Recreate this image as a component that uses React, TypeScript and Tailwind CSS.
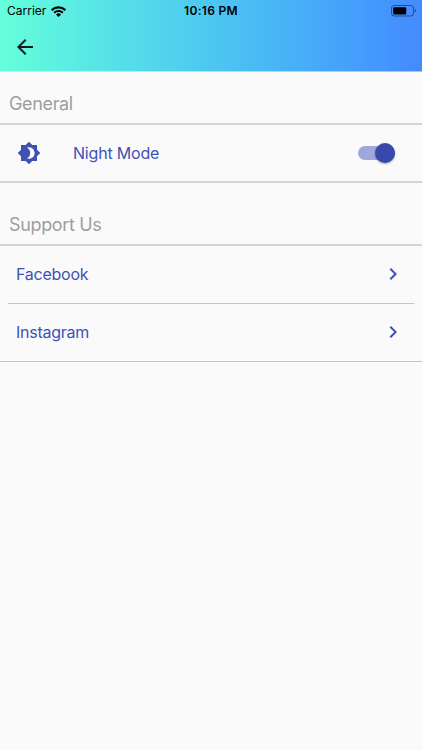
import { useState } from "react";
import { MdArrowBack, MdChevronRight } from "react-icons/md";

const links = ["Facebook", "Instagram"];

function StatusBar() {
  return (
    <div className="grid h-[22px] grid-cols-3 items-center pl-[7px] pr-[6px] text-black">
      <div className="flex items-center gap-[5px]">
        <span className="text-[12px] leading-none">Carrier</span>
        <svg width="15" height="11" viewBox="0 0 15 11" fill="none" stroke="currentColor">
          <path d="M0.7 4.1a9.7 9.7 0 0 1 13.6 0" strokeWidth="2.2" />
          <path d="M3.2 6.7a6.1 6.1 0 0 1 8.6 0" strokeWidth="2" />
          <path d="M7.5 11 5 8.5a3.6 3.6 0 0 1 5 0z" fill="currentColor" stroke="none" />
        </svg>
      </div>
      <span className="pr-px text-center text-[12px] font-semibold leading-none tracking-[0.3px]">
        10:16 PM
      </span>
      <svg className="justify-self-end" width="25" height="12" viewBox="0 0 25 12">
        <rect x="0.5" y="0.5" width="22" height="10.5" rx="2.6" fill="none" stroke="#000" strokeOpacity="0.45" />
        <rect x="2.2" y="2.2" width="13" height="7.2" rx="1" fill="#000" />
        <path d="M23.7 4v3.6c.8-.3 1.2-1 1.2-1.8s-.4-1.5-1.2-1.8z" fillOpacity="0.5" />
      </svg>
    </div>
  );
}

function NightIcon() {
  return (
    <svg width="24" height="24" viewBox="0 0 24 24" fill="currentColor" fillRule="evenodd">
      <path d="M20 8.69V4h-4.69L12 .69 8.69 4H4v4.69L.69 12 4 15.31V20h4.69L12 23.31 15.31 20H20v-4.69L23.31 12zM9.9 6.7a5.7 5.7 0 1 1 0 10.6a5.9 5.9 0 0 0 0-10.6z" />
    </svg>
  );
}

function SectionTitle({ title }: { title: string }) {
  return (
    <h2 className="pl-[9px] text-[18px] leading-[22px] tracking-[-0.35px] text-[#9e9e9e]">{title}</h2>
  );
}

function Toggle({ on, onChange }: { on: boolean; onChange: () => void }) {
  return (
    <button
      role="switch"
      aria-checked={on}
      aria-label="Night Mode"
      onClick={onChange}
      className={`flex h-[14px] w-[37px] items-center rounded-full ${
        on ? "justify-end bg-[#9fa8da]" : "justify-start bg-gray-300"
      }`}
    >
      <span
        className={`size-[20px] shrink-0 rounded-full shadow-[0_1px_2px_rgba(0,0,0,0.35)] ${
          on ? "bg-[#3949ab]" : "bg-white"
        }`}
      />
    </button>
  );
}

export default function App() {
  const [nightMode, setNightMode] = useState(true);

  return (
    <div className="min-h-[750px] w-full bg-[#fafafa] font-['Inter',sans-serif]">
      <header className="h-[72px] border-b border-white/50 bg-linear-to-r from-[#64ffda] to-[#448aff]">
        <StatusBar />
        <button aria-label="Back" className="ml-[13px] mt-[13px] block">
          <MdArrowBack size={24} className="text-[#141c1a]" />
        </button>
      </header>

      <main>
        <section className="pt-[21px]">
          <SectionTitle title="General" />
          <div className="mt-2 flex h-[60px] items-center border-y-2 border-[#d4d4d4] pl-[17px] pr-[27px] text-[#3f51b5]">
            <NightIcon />
            <span className="ml-8 grow text-[16px] tracking-[-0.2px]">Night Mode</span>
            <Toggle on={nightMode} onChange={() => setNightMode(!nightMode)} />
          </div>
        </section>

        <section className="pt-[31px]">
          <SectionTitle title="Support Us" />
          <ul className="mt-2 border-b border-t-2 border-b-[#c4c4c4] border-t-[#d4d4d4] px-[8px] text-[#3f51b5]">
            {links.map((link) => (
              <li
                key={link}
                className="flex h-[58px] items-center justify-between border-b border-[#c4c4c4] pb-px pl-2 pr-[9px] last:h-[57px] last:border-b-0"
              >
                <span className="text-[16px] tracking-[-0.25px]">{link}</span>
                <MdChevronRight size={24} />
              </li>
            ))}
          </ul>
        </section>
      </main>
    </div>
  );
}
